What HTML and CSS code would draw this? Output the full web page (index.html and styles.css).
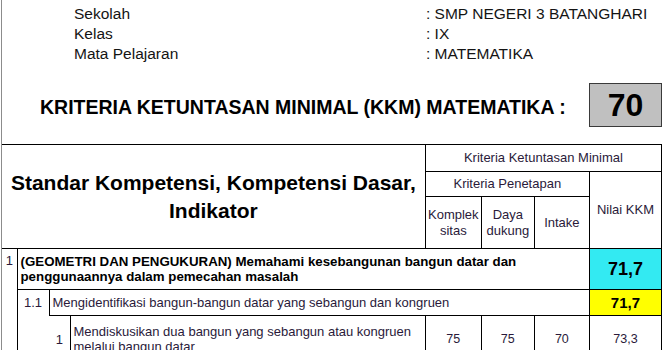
FILE: index.html
```html
<!DOCTYPE html>
<html>
<head>
<meta charset="utf-8">
<link rel="stylesheet" href="styles.css">
</head>
<body>
<div class="page">
  <div class="info">
    <div class="info-row"><span>Sekolah</span><span>: SMP NEGERI 3 BATANGHARI</span></div>
    <div class="info-row"><span>Kelas</span><span>: IX</span></div>
    <div class="info-row"><span>Mata Pelajaran</span><span>: MATEMATIKA</span></div>
  </div>
  <div class="kkm">
    <div class="kkm-title">KRITERIA KETUNTASAN MINIMAL (KKM) MATEMATIKA :</div>
    <div class="kkm-box">70</div>
  </div>
  <table class="grid">
    <colgroup>
      <col class="c-a"><col class="c-b"><col class="c-c"><col class="c-d">
      <col class="c-e"><col class="c-f"><col class="c-g"><col class="c-h">
    </colgroup>
    <tr class="h1">
      <th class="title-cell" colspan="4" rowspan="3">Standar Kompetensi, Kompetensi Dasar,<br>Indikator</th>
      <th class="sub" colspan="4">Kriteria Ketuntasan Minimal</th>
    </tr>
    <tr class="h2">
      <th class="sub" colspan="3">Kriteria Penetapan</th>
      <th class="sub" rowspan="2">Nilai KKM</th>
    </tr>
    <tr class="h3">
      <th class="sub two">Komplek<br>sitas</th>
      <th class="sub two">Daya<br>dukung</th>
      <th class="sub">Intake</th>
    </tr>
    <tr class="r1">
      <td class="no-a">1</td>
      <td class="sk" colspan="6">(GEOMETRI DAN PENGUKURAN) Memahami kesebangunan bangun datar dan<br>penggunaannya dalam pemecahan masalah</td>
      <td class="val-cyan">71,7</td>
    </tr>
    <tr class="r2">
      <td class="blank-a"></td>
      <td class="kd-no">1.1</td>
      <td class="kd" colspan="5">Mengidentifikasi bangun-bangun datar yang sebangun dan kongruen</td>
      <td class="val-yellow">71,7</td>
    </tr>
    <tr class="r3">
      <td class="blank-a"></td>
      <td class="blank-b"></td>
      <td class="ind-no">1</td>
      <td class="ind">Mendiskusikan dua bangun yang sebangun atau kongruen<br>melalui bangun datar</td>
      <td class="num">75</td>
      <td class="num">75</td>
      <td class="num">70</td>
      <td class="num">73,3</td>
    </tr>
  </table>
</div>
</body>
</html>
```
FILE: styles.css
```css
html, body {
  margin: 0;
  padding: 0;
  background: #fff;
}
body {
  font-family: "Liberation Sans", Arial, sans-serif;
  color: #000;
}
.page {
  margin-left: 1px;
  border-left: 1px solid #8c8c8c;
  height: 350px;
  overflow: hidden;
  padding-top: 4px;
  box-sizing: border-box;
}
.info {
  padding-left: 72px;
  font-size: 15.5px;
  line-height: 20px;
  color: #141414;
}
.info-row {
  display: grid;
  grid-template-columns: 352px auto;
}
.kkm {
  display: flex;
  margin-top: 19px;
  height: 44px;
}
.kkm-title {
  padding-left: 38px;
  margin-top: 12px;
  font-size: 19.5px;
  font-weight: bold;
  line-height: 24px;
  white-space: nowrap;
}
.kkm-box {
  margin-left: auto;
  margin-right: 5px;
  width: 73px;
  height: 44px;
  box-sizing: border-box;
  background: #c0c0c0;
  border: 1px solid #3a3a3a;
  font-size: 32px;
  font-weight: bold;
  display: flex;
  align-items: center;
  justify-content: center;
}
.grid {
  margin-top: 17px;
  border-collapse: collapse;
  table-layout: fixed;
  width: 660px;
}
.c-a { width: 15px; }
.c-b { width: 32px; }
.c-c { width: 21px; }
.c-d { width: 355px; }
.c-e { width: 56px; }
.c-f { width: 53px; }
.c-g { width: 55px; }
.c-h { width: 72px; }
.grid th, .grid td {
  border: 1px solid #000;
  padding: 0;
  font-weight: normal;
  font-size: 13px;
  color: #2a1a3a;
  vertical-align: middle;
  white-space: nowrap;
  overflow: hidden;
}
.h1 { height: 27px; }
.h2 { height: 25px; }
.h3 { height: 52px; }
.r1 { height: 41px; }
.r2 { height: 26px; }
.r3 { height: 47px; }
.grid .title-cell {
  border-left: none;
  font-size: 21px;
  font-weight: bold;
  line-height: 28px;
  color: #000;
  text-align: center;
}
.grid .sub {
  text-align: center;
  line-height: 16px;
}
.grid .no-a {
  border-left: none;
  border-bottom: none;
  vertical-align: top;
  text-align: center;
  padding-top: 4px;
  line-height: 15px;
}
.grid .blank-a {
  border-left: none;
  border-top: none;
  border-bottom: none;
}
.grid .sk {
  padding-left: 3px;
  font-size: 13.3px;
  font-weight: bold;
  line-height: 15px;
  color: #000;
}
.grid .val-cyan {
  background: #33eaf2;
  text-align: center;
  font-size: 18px;
  font-weight: bold;
  color: #000;
}
.grid .kd-no {
  border-bottom: none;
  text-align: center;
}
.grid .kd {
  padding-left: 3px;
}
.grid .val-yellow {
  background: #ffff00;
  text-align: center;
  font-size: 15px;
  font-weight: bold;
  color: #000;
}
.grid .blank-b {
  border-top: none;
  border-right: none;
}
.grid .ind-no {
  border-left: none;
  text-align: center;
}
.grid .ind {
  padding-left: 3px;
  line-height: 15px;
}
.grid .num {
  text-align: center;
  font-size: 12.5px;
}
```
